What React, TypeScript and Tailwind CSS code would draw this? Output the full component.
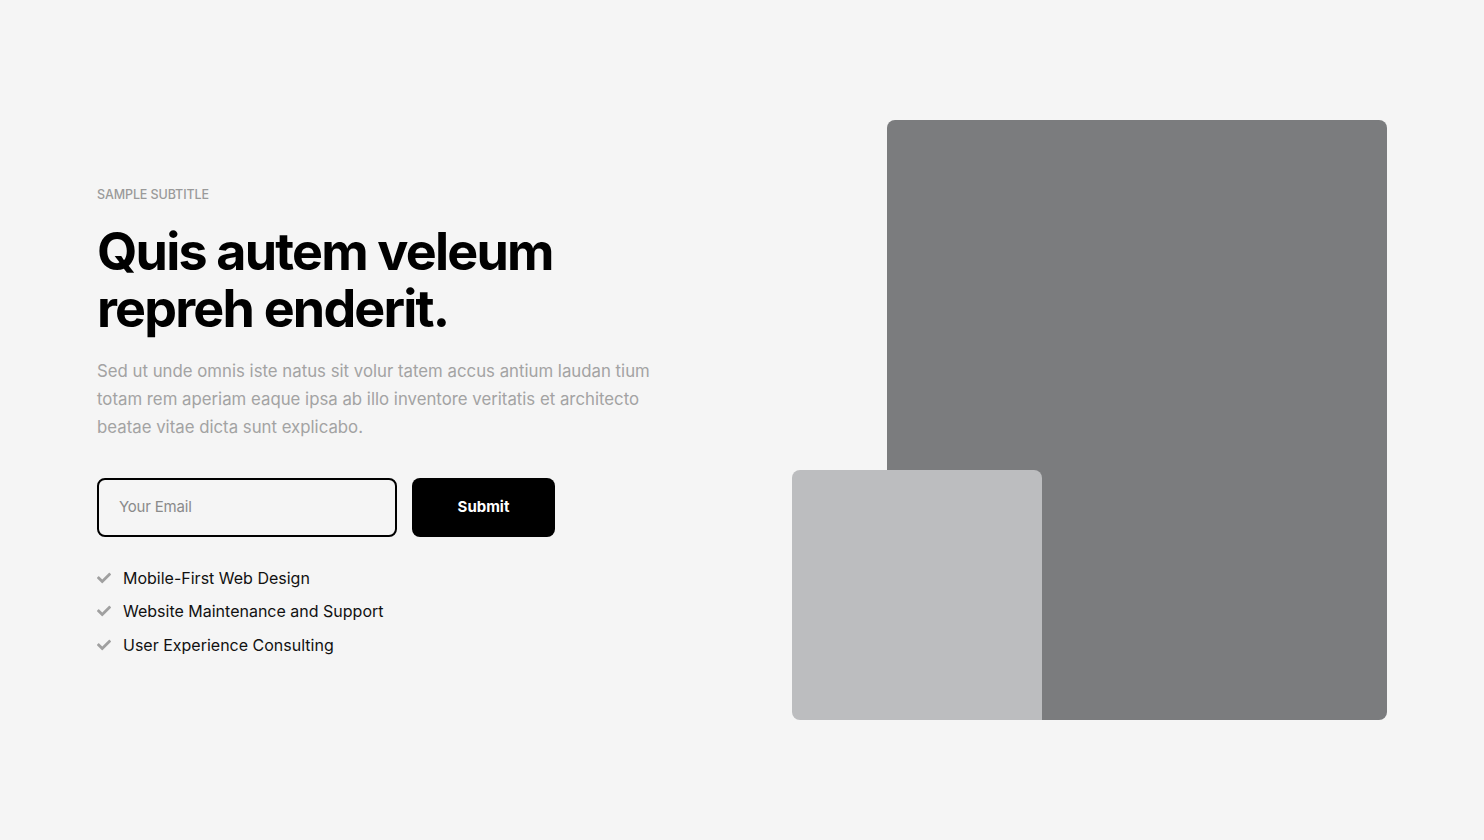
import React from "react";
import { FaCheck } from "react-icons/fa";

export default function App() {
  const items = [
    "Mobile-First Web Design",
    "Website Maintenance and Support",
    "User Experience Consulting",
  ];
  return (
    <div
      className="min-h-[840px] w-full bg-[#f5f5f5] flex items-center justify-between px-[97px] py-[120px]"
      style={{ fontFamily: "Inter, 'Noto Sans', sans-serif" }}
    >
      <div className="flex flex-col w-[570px] pt-[4px]">
        <div className="text-[12.5px] font-medium text-[#9a9a9a] tracking-[-0.1px] leading-[16px]">
          SAMPLE SUBTITLE
        </div>
        <h1 className="mt-[20px] text-[52px] font-bold leading-[57px] tracking-[-1.8px] text-black">
          Quis autem veleum
          <br />
          repreh enderit.
        </h1>
        <p className="mt-[20px] text-[16.8px] leading-[28px] text-[#a3a3a3] tracking-[0px] w-[565px]">
          Sed ut unde omnis iste natus sit volur tatem accus antium laudan tium totam rem aperiam eaque ipsa ab illo inventore veritatis et architecto beatae vitae dicta sunt explicabo.
        </p>
        <div className="mt-[37px] flex gap-[15px]">
          <div className="w-[300px] h-[59px] border-2 border-black rounded-[8px] flex items-center px-[20px]">
            <span className="text-[15px] text-[#8a8a8a] tracking-[-0.2px]">Your Email</span>
          </div>
          <button className="w-[143px] h-[59px] bg-black rounded-[8px] text-white text-[15px] font-bold">
            Submit
          </button>
        </div>
        <ul className="mt-[28px] flex flex-col gap-[8.5px]">
          {items.map((t) => (
            <li key={t} className="flex items-center gap-[12px] h-[25px]">
              <FaCheck className="text-[#a0a0a0] w-[14px] h-[14px]" />
              <span className="text-[16px] text-[#111] tracking-[0px]">{t}</span>
            </li>
          ))}
        </ul>
      </div>
      <div className="relative w-[595px] h-[600px] flex justify-end">
        <div className="w-[500px] h-[600px] bg-[#7b7c7e] rounded-[8px]" />
        <div className="absolute left-0 bottom-0 w-[250px] h-[250px] bg-[#bcbdbf] rounded-t-[8px] rounded-bl-[8px]" />
      </div>
    </div>
  );
}
